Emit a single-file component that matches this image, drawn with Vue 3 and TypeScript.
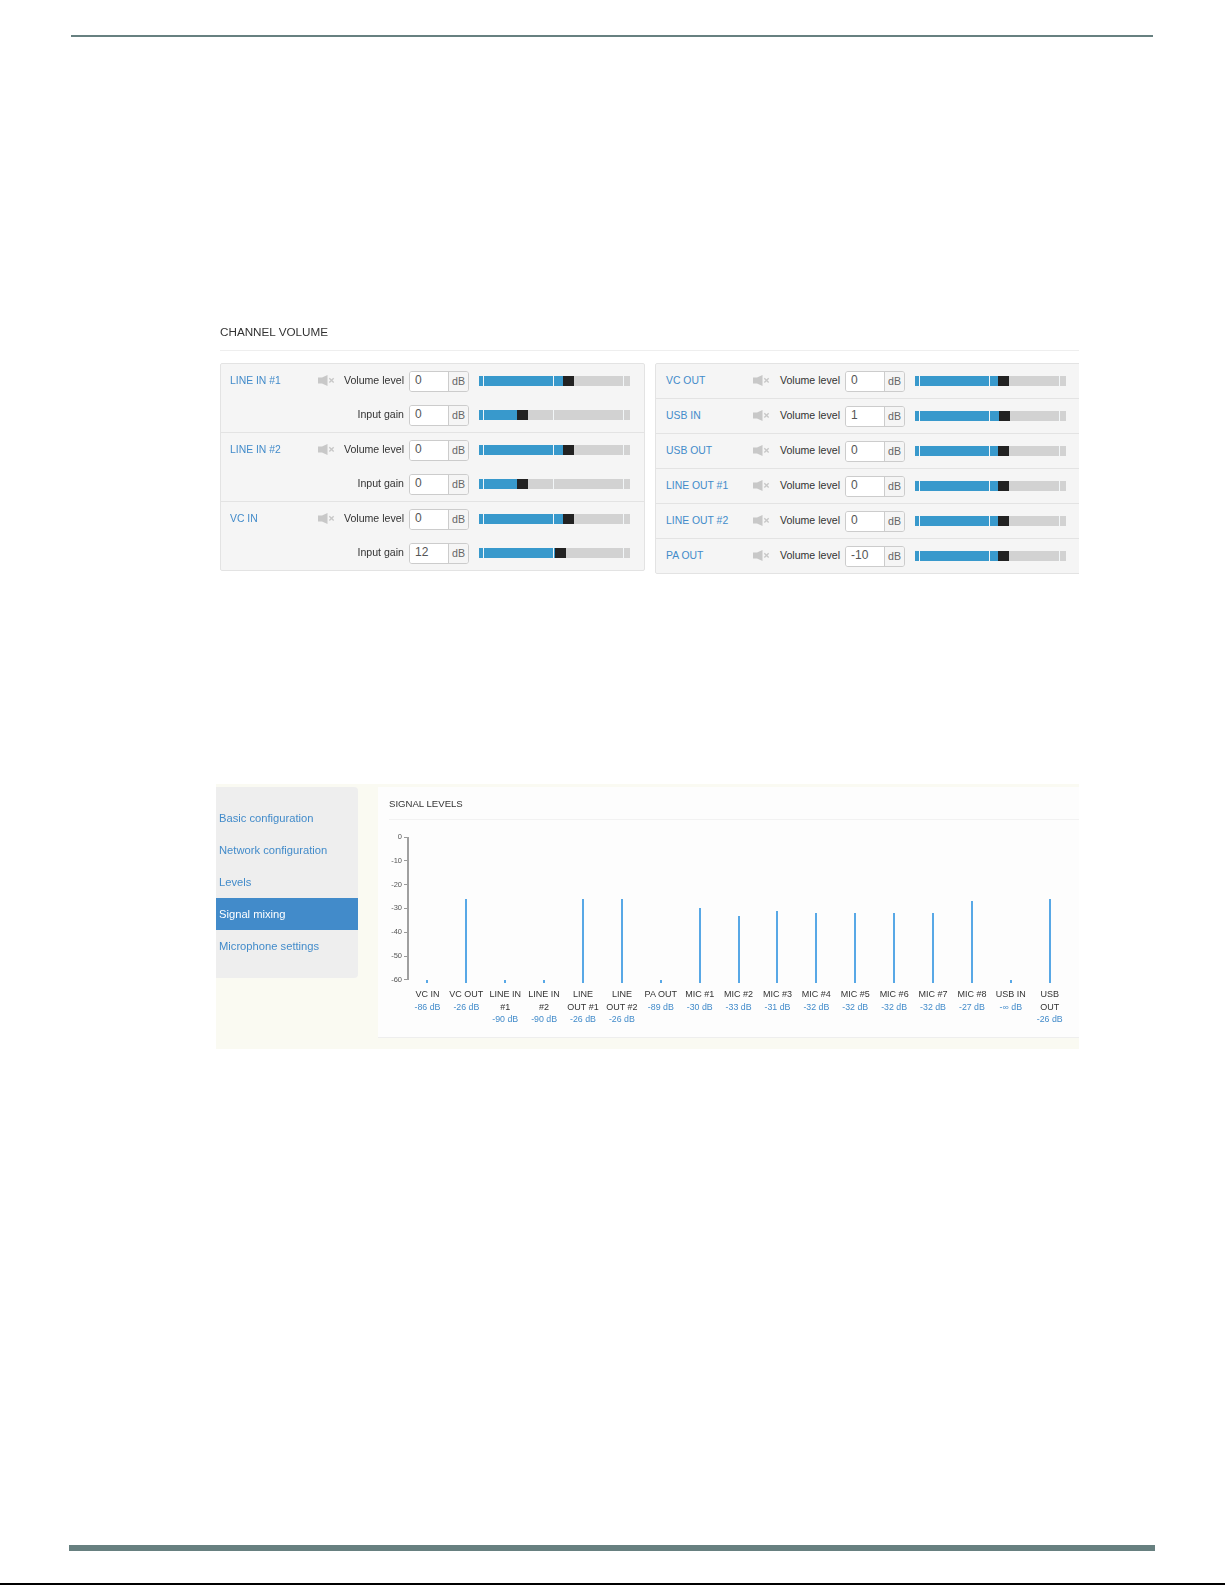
<script setup lang="ts">
interface Row { label: string; pos: number; value: string }
interface Group { name: string; rows: Row[] }
interface Level { lines: string[]; db: number | null; value: string }

const leftGroups: Group[] = [
  { name: 'LINE IN #1', rows: [{ label: 'Volume level', pos: 84, value: '0' }, { label: 'Input gain', pos: 38, value: '0' }] },
  { name: 'LINE IN #2', rows: [{ label: 'Volume level', pos: 84, value: '0' }, { label: 'Input gain', pos: 38, value: '0' }] },
  { name: 'VC IN', rows: [{ label: 'Volume level', pos: 84, value: '0' }, { label: 'Input gain', pos: 76, value: '12' }] },
]
const rightGroups: Group[] = [
  { name: 'VC OUT', rows: [{ label: 'Volume level', pos: 83, value: '0' }] },
  { name: 'USB IN', rows: [{ label: 'Volume level', pos: 84, value: '1' }] },
  { name: 'USB OUT', rows: [{ label: 'Volume level', pos: 83, value: '0' }] },
  { name: 'LINE OUT #1', rows: [{ label: 'Volume level', pos: 83, value: '0' }] },
  { name: 'LINE OUT #2', rows: [{ label: 'Volume level', pos: 83, value: '0' }] },
  { name: 'PA OUT', rows: [{ label: 'Volume level', pos: 83, value: '-10' }] },
]
const panels = [
  { key: 'left', groups: leftGroups },
  { key: 'right', groups: rightGroups },
]
const notches = [4, 74, 144]

const menu = ['Basic configuration', 'Network configuration', 'Levels', 'Signal mixing', 'Microphone settings']
const ticks = ['0', '-10', '-20', '-30', '-40', '-50', '-60']
const levels: Level[] = [
  { lines: ['VC IN'], db: -86, value: '-86 dB' },
  { lines: ['VC OUT'], db: -26, value: '-26 dB' },
  { lines: ['LINE IN', '#1'], db: -90, value: '-90 dB' },
  { lines: ['LINE IN', '#2'], db: -90, value: '-90 dB' },
  { lines: ['LINE', 'OUT #1'], db: -26, value: '-26 dB' },
  { lines: ['LINE', 'OUT #2'], db: -26, value: '-26 dB' },
  { lines: ['PA OUT'], db: -89, value: '-89 dB' },
  { lines: ['MIC #1'], db: -30, value: '-30 dB' },
  { lines: ['MIC #2'], db: -33, value: '-33 dB' },
  { lines: ['MIC #3'], db: -31, value: '-31 dB' },
  { lines: ['MIC #4'], db: -32, value: '-32 dB' },
  { lines: ['MIC #5'], db: -32, value: '-32 dB' },
  { lines: ['MIC #6'], db: -32, value: '-32 dB' },
  { lines: ['MIC #7'], db: -32, value: '-32 dB' },
  { lines: ['MIC #8'], db: -27, value: '-27 dB' },
  { lines: ['USB IN'], db: null, value: '-∞ dB' },
  { lines: ['USB', 'OUT'], db: -26, value: '-26 dB' },
]
function barHeight(db: number | null): number {
  if (db === null) return 3
  return Math.max(3, Math.round(146 - 2.383 * Math.abs(db)))
}
</script>

<template>
  <div class="page">
    <div class="top-rule"></div>

    <section class="volume">
      <h2 class="volume-title">CHANNEL VOLUME</h2>
      <div class="panels">
        <div v-for="panel in panels" :key="panel.key" class="panel" :class="panel.key">
          <div v-for="group in panel.groups" :key="group.name" class="group">
            <div v-for="(row, i) in group.rows" :key="row.label" class="row">
              <a class="name">{{ i === 0 ? group.name : '' }}</a>
              <svg v-if="i === 0" class="mute" width="17" height="11" viewBox="0 0 17 11">
                <path d="M0 2.5h4L9.5 0v11L4 8.5H0z" fill="#c8c8c8" />
                <path d="M11.3 3.2l4.4 4.4M15.7 3.2l-4.4 4.4" stroke="#c8c8c8" stroke-width="1.4" fill="none" />
              </svg>
              <span v-else class="mute-gap"></span>
              <span class="label">{{ row.label }}</span>
              <div class="field">
                <span class="value">{{ row.value }}</span>
                <span class="unit">dB</span>
              </div>
              <div class="slider">
                <div class="fill" :style="{ width: row.pos + 'px' }"></div>
                <div class="thumb" :style="{ left: row.pos + 'px' }"></div>
                <i v-for="n in notches" :key="n" class="notch" :style="{ left: n + 'px' }"></i>
              </div>
            </div>
          </div>
        </div>
      </div>
    </section>

    <section class="signal">
      <nav class="menu">
        <a v-for="item in menu" :key="item" class="menu-item" :class="{ active: item === 'Signal mixing' }">{{ item }}</a>
      </nav>
      <div class="card">
        <h3 class="card-title">SIGNAL LEVELS</h3>
        <div class="chart">
          <div class="yaxis">
            <div v-for="t in ticks" :key="t" class="tick"><span>{{ t }}</span><i></i></div>
          </div>
          <div class="cols">
            <div v-for="(lv, i) in levels" :key="i" class="col">
              <div class="bar-zone">
                <div class="bar" :style="{ height: barHeight(lv.db) + 'px' }"></div>
              </div>
              <div class="col-name">
                <div v-for="l in lv.lines" :key="l">{{ l }}</div>
              </div>
              <div class="col-value">{{ lv.value }}</div>
            </div>
          </div>
        </div>
      </div>
    </section>

    <div class="bottom-rule"></div>
    <div class="black-line"></div>
  </div>
</template>

<style>
html, body { margin: 0; background: #fff; }
</style>

<style scoped>
.page {
  width: 1225px;
  height: 1585px;
  display: flex;
  flex-direction: column;
  font-family: "Liberation Sans", Arial, sans-serif;
  background: #fff;
  overflow: hidden;
}
.top-rule {
  height: 2px;
  margin: 35px 72px 0 71px;
  background: #678080;
  flex: none;
}
.volume {
  width: 859px;
  margin: 285px 0 0 220px;
  overflow: hidden;
  flex: none;
  filter: blur(0.4px);
}
.volume-title {
  margin: 0;
  padding: 1px 0 9px;
  border-bottom: 1px solid #eeeeee;
  font-size: 11.7px;
  line-height: 18px;
  font-weight: 400;
  color: #333;
}
.panels {
  display: flex;
  align-items: flex-start;
  gap: 10px;
  margin-top: 12px;
}
.panel {
  flex: none;
  background: #f5f5f5;
  border: 1px solid #e3e3e3;
  border-radius: 2px;
}
.panel.left { width: 423px; }
.panel.right { width: 440px; }
.group { border-bottom: 1px solid #e3e3e3; }
.group:last-child { border-bottom: 0; }
.row {
  display: flex;
  align-items: center;
  height: 34px;
  padding-left: 9px;
}
.right .row { padding-left: 10px; }
.name {
  width: 88px;
  flex: none;
  margin-bottom: 2px;
  font-size: 10.4px;
  color: #428bca;
  white-space: nowrap;
}
.right .name { width: 87px; }
.mute, .mute-gap { width: 17px; height: 11px; flex: none; margin-bottom: 2px; }
.label {
  width: 69px;
  flex: none;
  margin-bottom: 2px;
  text-align: right;
  font-size: 10.6px;
  color: #333;
  white-space: nowrap;
}
.right .label { width: 70px; }
.field {
  display: flex;
  flex: none;
  width: 60px;
  height: 21px;
  margin-left: 5px;
  box-sizing: border-box;
  border: 1px solid #cccccc;
  border-radius: 3px;
  overflow: hidden;
}
.value {
  width: 38px;
  flex: none;
  box-sizing: border-box;
  padding-left: 5px;
  background: #fff;
  font-size: 12px;
  line-height: 17px;
  color: #555;
}
.unit {
  flex: 1;
  border-left: 1px solid #cccccc;
  background: #f5f5f5;
  text-align: center;
  font-size: 10.6px;
  line-height: 18px;
  color: #666;
}
.slider {
  position: relative;
  width: 151px;
  height: 10px;
  margin-left: 10px;
  flex: none;
  background: #d2d2d2;
}
.fill {
  position: absolute;
  left: 0;
  top: 0;
  bottom: 0;
  background: #3899cc;
}
.thumb {
  position: absolute;
  top: 0;
  width: 11px;
  height: 10px;
  background: #222222;
}
.notch {
  position: absolute;
  top: 0;
  width: 1px;
  height: 10px;
  background: #f2f6f8;
}
.signal {
  display: flex;
  align-items: flex-start;
  width: 863px;
  height: 265px;
  margin: 210px 0 0 216px;
  box-sizing: border-box;
  padding-top: 3px;
  background: #fafaf2;
  flex: none;
  filter: blur(0.5px);
}
.menu {
  width: 142px;
  flex: none;
  box-sizing: border-box;
  padding: 15px 0 16px;
  background: #eeeeee;
  border-radius: 0 4px 4px 0;
}
.menu-item {
  display: block;
  height: 32px;
  padding-left: 3px;
  font-size: 11.2px;
  line-height: 32px;
  color: #428bca;
}
.menu-item.active {
  background: #428bca;
  color: #fff;
}
.card {
  flex: 1;
  height: 251px;
  margin-left: 20px;
  box-sizing: border-box;
  padding-left: 11px;
  background: #fdfdfd;
  border-bottom: 1px solid #eeeeee;
}
.card-title {
  margin: 0;
  height: 33px;
  box-sizing: border-box;
  border-bottom: 1px solid #f2f2f2;
  font-size: 9.6px;
  line-height: 33px;
  font-weight: 400;
  color: #333;
}
.chart {
  display: flex;
  align-items: flex-start;
  margin-top: 13px;
}
.yaxis {
  position: relative;
  width: 19px;
  height: 151px;
  flex: none;
  display: flex;
  flex-direction: column;
  justify-content: space-between;
}
.yaxis::after {
  content: "";
  position: absolute;
  right: -1px;
  top: 4px;
  bottom: 4px;
  width: 2px;
  background: #a0a0a0;
}
.tick {
  display: flex;
  align-items: center;
  justify-content: flex-end;
  height: 8px;
  font-size: 7.5px;
  line-height: 8px;
  color: #555;
}
.tick i {
  width: 4px;
  height: 1px;
  margin-left: 2px;
  background: #999999;
}
.cols { display: flex; }
.col {
  width: 38.9px;
  flex: none;
  text-align: center;
}
.bar-zone {
  height: 150px;
  display: flex;
  align-items: flex-end;
  justify-content: center;
}
.bar {
  width: 2px;
  background: #58a8e6;
}
.col-name {
  margin-top: 5px;
  font-size: 9px;
  line-height: 12.5px;
  color: #333;
  white-space: nowrap;
}
.col-value {
  font-size: 8.8px;
  line-height: 12.5px;
  color: #428bca;
  white-space: nowrap;
}
.bottom-rule {
  height: 6px;
  margin: auto 70px 0 69px;
  background: #678080;
  flex: none;
}
.black-line {
  height: 2px;
  margin-top: 32px;
  background: #000;
  flex: none;
}
</style>
